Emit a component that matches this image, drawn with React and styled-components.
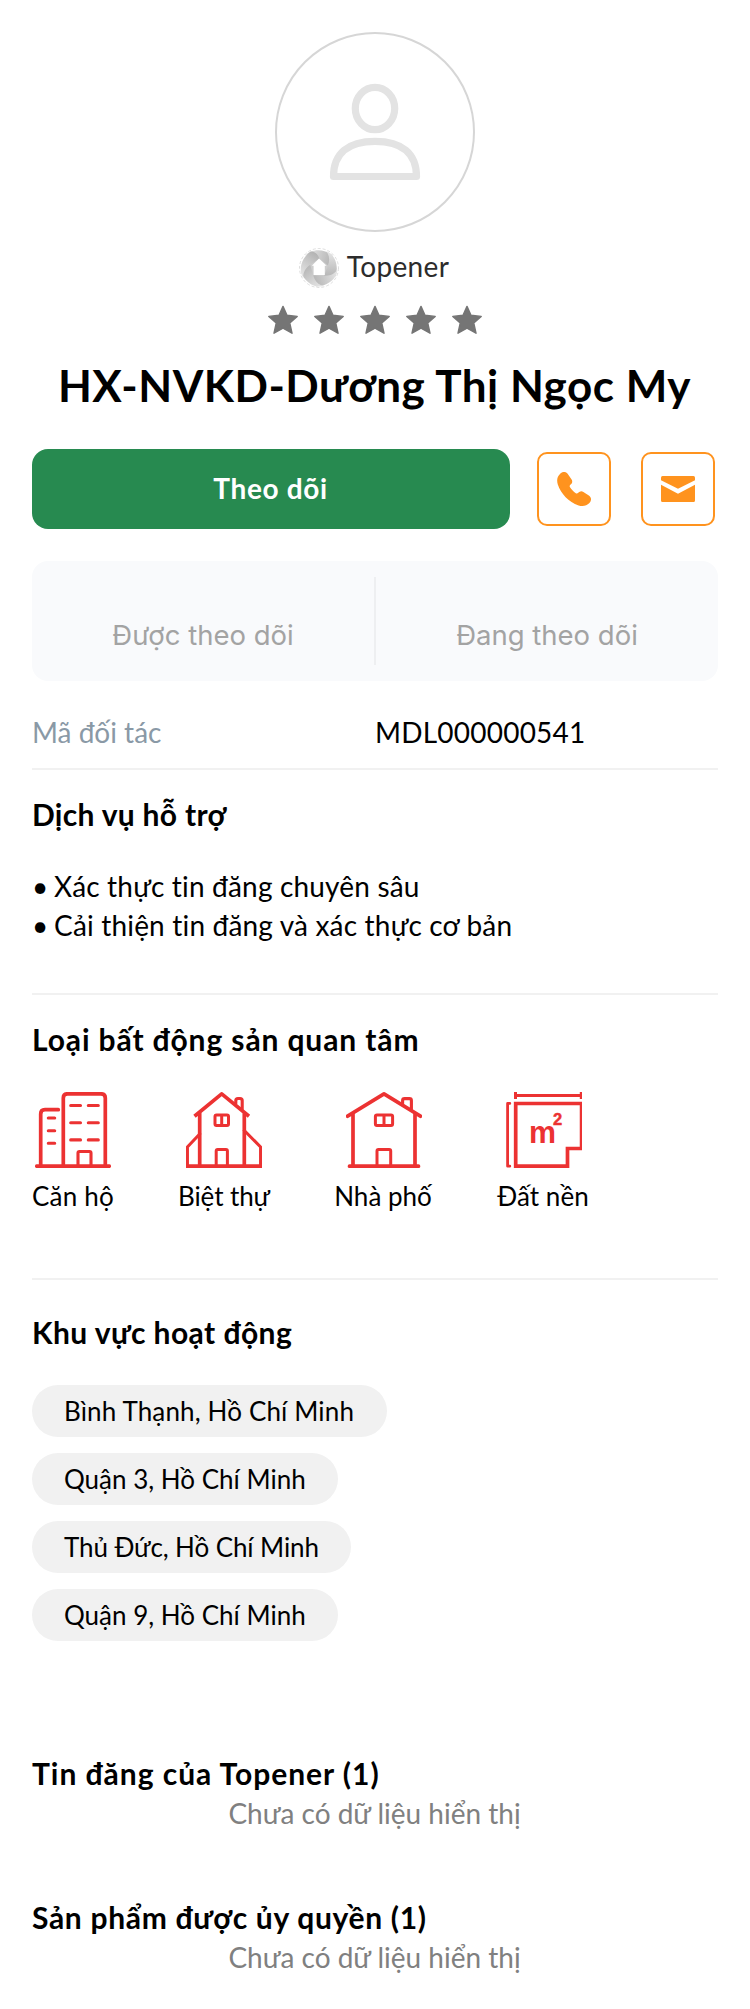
import React from "react";
import styled, { createGlobalStyle } from "styled-components";

const GlobalStyle = createGlobalStyle`
  * { box-sizing: border-box; }
  body {
    margin: 0;
    background: #fff;
    color: #000;
    font-family: Lato, "Open Sans", sans-serif;
    font-size: 28px;
    font-variant-ligatures: none;
  }
`;

const Page = styled.main`
  width: 750px;
  min-height: 2009px;
  padding: 32px 32px 0;
`;

const Header = styled.header`
  display: flex;
  flex-direction: column;
  align-items: center;
`;

const Avatar = styled.div`
  width: 200px;
  height: 200px;
  border: 2px solid #d6d6d6;
  border-radius: 50%;
  overflow: hidden;
  svg { display: block; margin: -2px; }
`;

const Brand = styled.div`
  display: flex;
  gap: 8px;
  height: 40px;
  margin-top: 16px;
  padding-right: 2px;
  line-height: 37px;
  color: #2c2c2c;
  letter-spacing: 0.35px;
`;

const Stars = styled.div`
  display: flex;
  gap: 16px;
  height: 31px;
  margin-top: 16px;
  align-items: center;
`;

const Name = styled.h1`
  margin: 22px 0 0;
  padding-right: 1px;
  font-size: 44px;
  line-height: 56px;
  font-weight: 700;
  letter-spacing: 0.52px;
  white-space: nowrap;
`;

const Actions = styled.div`
  display: flex;
  align-items: center;
  margin-top: 36px;
`;

const FollowButton = styled.button`
  width: 478px;
  height: 80px;
  padding: 0 1px 2px 0;
  margin-right: 27px;
  border: 0;
  border-radius: 16px;
  background: #278a50;
  color: #fff;
  font: 700 28px Lato, sans-serif;
  letter-spacing: 0.65px;
`;

const ContactButton = styled.button`
  display: flex;
  align-items: center;
  justify-content: center;
  width: 74px;
  height: 74px;
  padding: 0;
  border: 2px solid #ff931e;
  border-radius: 10px;
  background: #fff;
  color: #ff931e;
  & + & { margin-left: 30px; }
`;

const Stats = styled.div`
  display: grid;
  grid-template-columns: 1fr 2px 1fr;
  height: 120px;
  margin-top: 32px;
  padding: 16px 0;
  border-radius: 16px;
  background: #f9fafc;
`;

const StatDivider = styled.div`
  background: #eeeff1;
`;

const Stat = styled.div`
  padding-top: 38px;
  text-align: center;
  font-family: Inter, Roboto, sans-serif;
  font-size: 27.5px;
  line-height: 40px;
  color: #a3a3a3;
`;

const InfoRow = styled.div`
  display: grid;
  grid-template-columns: 1fr 1fr;
  margin-top: 31px;
  padding-bottom: 16px;
  border-bottom: 2px solid #f1f1f1;
  line-height: 40px;
`;

const InfoLabel = styled.span`
  color: #8a99a6;
`;

const InfoValue = styled.span`
  letter-spacing: 0.22px;
`;

const Section = styled.section`
  padding: ${(p) => p.$top}px 0 ${(p) => p.$bottom}px;
  border-bottom: ${(p) => (p.$line ? "2px solid #f1f1f1" : "0")};
`;

const Heading = styled.h2`
  margin: 0;
  font-size: 30px;
  line-height: 40px;
  font-weight: 700;
  letter-spacing: ${(p) => p.$spacing}px;
`;

const ServiceList = styled.ul`
  margin: 33px 0 0;
  padding: 0;
  list-style: none;
`;

const Service = styled.li`
  display: flex;
  line-height: 39px;
  letter-spacing: 0.18px;
`;

const Bullet = styled.span`
  width: 22px;
`;

const Kinds = styled.div`
  display: flex;
  gap: 64px;
  margin-top: 33px;
`;

const Kind = styled.div`
  display: flex;
  flex-direction: column;
  align-items: center;
  gap: 10px;
  width: ${(p) => p.$width}px;
  font-size: 26px;
  line-height: 36px;
  white-space: nowrap;
`;

const KindLabel = styled.span`
  margin-right: ${(p) => p.$nudge}px;
  letter-spacing: ${(p) => p.$spacing}px;
`;

const Areas = styled.div`
  display: flex;
  flex-direction: column;
  align-items: flex-start;
  gap: 16px;
  margin-top: 33px;
`;

const Area = styled.span`
  height: 52px;
  width: ${(p) => p.$width}px;
  padding-left: 32px;
  border-radius: 26px;
  background: #f1f1f1;
  font-size: 26px;
  line-height: 52px;
  letter-spacing: ${(p) => p.$spacing}px;
  white-space: nowrap;
`;

const Empty = styled.p`
  margin: 1px 0 0;
  padding-right: 1px;
  line-height: 39px;
  text-align: center;
  color: #808080;
`;

const RedIcon = styled.svg`
  display: block;
  width: 76px;
  height: 76px;
  fill: none;
  stroke: #ec3232;
  stroke-width: 3.7;
  stroke-linecap: round;
  stroke-linejoin: round;
`;

const PersonIcon = () => (
  <svg width="200" height="200" fill="none" stroke="#e3e3e3" strokeWidth="7.2" strokeLinejoin="round">
    <ellipse cx="100" cy="76.5" rx="19.7" ry="21.2" />
    <path d="M58.5 144.5C58.5 121.5 73 109.4 100 109.4S141.5 121.5 141.5 144.5Z" />
  </svg>
);

const BrandLogo = () => (
  <svg width="40" height="40" viewBox="0 0 40 40">
    <defs>
      <linearGradient id="blade" gradientUnits="userSpaceOnUse" x1="6" y1="6" x2="32" y2="14">
        <stop offset="0" stopColor="#e8e8e8" />
        <stop offset="1" stopColor="#b4b4b4" />
      </linearGradient>
    </defs>
    <circle cx="20" cy="20" r="19.5" fill="#fff" stroke="#d6d6d6" strokeWidth="0.8" strokeDasharray="3 2" />
    <circle cx="20" cy="20" r="12" fill="#cdcdcd" />
    {[0, 72, 144, 216, 288].map((a) => (
      <path
        key={a}
        transform={`rotate(${a} 20 20)`}
        fill="url(#blade)"
        d="M6 8C11 1 24 -.2 33 7C34.5 11 32.5 15 29 17.5L20 10.5C15 6.5 10 6.5 6 8Z"
      />
    ))}
    <path d="M20 10.5L27.6 17.8H25.8V27H14.6V17.8H12.8Z" fill="#fff" />
  </svg>
);

const StarIcon = () => (
  <svg width="30" height="30" viewBox="0 0 30 30" fill="#757575" stroke="#757575" strokeWidth="1.4" strokeLinejoin="round">
    <path d="M15 1.4L19 10.2L29.2 11.4L21.8 18.1L24 28.2L15 23.2L6 28.2L8.2 18.1L.8 11.4L11 10.2Z" />
  </svg>
);

const PhoneIcon = () => (
  <svg width="34" height="34" viewBox="0 0 34 34" fill="currentColor">
    <path d="M3 2C5.5-.6 8.8-.4 10.8 2L14.6 7.6C15.8 9.6 15.2 11.2 13.6 12.6C12.6 13.4 12.4 14.2 13 15.2C14.6 17.6 16.6 19.8 18.8 21.2C19.8 21.8 20.6 21.5 21.2 20.8C22.8 19.2 24.6 18.8 26.4 20L32.2 23.8C34.6 25.6 34.6 28.6 32.4 31C29.6 34 25.6 34.6 21.6 33.4C11.6 30 4 21.6.8 12.4C-.4 8.6 0 4.8 3 2Z" />
  </svg>
);

const MailIcon = () => (
  <svg width="34" height="26" viewBox="0 0 34 26" fill="currentColor">
    <path d="M1.5 0H32.5Q34 0 34 1.5V4.3L17 12.8L0 4.3V1.5Q0 0 1.5 0Z" />
    <path d="M0 8.8L17 17.7L34 8.8V24.5Q34 26 32.5 26H1.5Q0 26 0 24.5Z" />
  </svg>
);

const ApartmentIcon = () => (
  <RedIcon viewBox="0 0 76 76">
    <path d="M1.8 74.2H74.2M28.3 74V6Q28.3 1.8 32.5 1.8H66Q70.3 1.8 70.3 6V74M5.7 74V22Q5.7 17.7 10 17.7H23.3" />
    <path
      strokeWidth="3.1"
      d="M13.3 26H19.7M13.3 38.7H19.7M13.3 51.3H19.7M35.7 13.5H45.5M53.3 13.5H63.3M35.7 30.7H45.5M53.3 30.7H63.3M35.7 47.9H45.5M53.3 47.9H63.3M43 73V61Q43 59.5 44.5 59.5H54.5Q56 59.5 56 61V73"
    />
  </RedIcon>
);

const VillaIcon = () => (
  <RedIcon viewBox="0 0 76 76">
    <path strokeLinecap="butt" d="M0 74.2H76M13.7 21V74M58.3 21V74M8.5 24.3L35.7 1.9L63 24.3" />
    <path strokeWidth="3.1" d="M13.7 42L1.4 55V73M58.3 38.5L74.6 55V73M49.8 11.5V8.5Q49.8 6.5 52 6.5H54Q56.2 6.5 56.2 8.5V17" />
    <path strokeWidth="3" d="M30.5 22.9H41Q42.5 22.9 42.5 24.4V32Q42.5 33.5 41 33.5H30.5Q29 33.5 29 32V24.4Q29 22.9 30.5 22.9ZM35.7 23V33.5M30.2 73V59Q30.2 57.5 31.7 57.5H39.9Q41.4 57.5 41.4 59V73" />
  </RedIcon>
);

const TownhouseIcon = () => (
  <RedIcon viewBox="0 0 76 76">
    <path d="M3.5 74.2H72.5M7 22V74M69 22V74M1.6 24.2L38 1.9L74.4 24.2" />
    <path strokeWidth="3.1" d="M56.6 12V8.5Q56.6 6.6 58.6 6.6H63.4Q65.4 6.6 65.4 8.5V17" />
    <path strokeWidth="3" d="M31 22.9H45Q46.6 22.9 46.6 24.4V32Q46.6 33.5 45 33.5H31Q29.4 33.5 29.4 32V24.4Q29.4 22.9 31 22.9ZM38 23V33.5M31 73V59Q31 57.5 32.5 57.5H43.2Q44.7 57.5 44.7 59V73" />
  </RedIcon>
);

const LandIcon = () => (
  <RedIcon viewBox="0 0 76 76">
    <path strokeWidth="3" strokeLinecap="butt" d="M9.5 3.5H75M9.5 0V7M75.3 0V7" />
    <path strokeWidth="2.8" d="M3.8 11.4H1.6V74.2H3.8" />
    <path strokeLinejoin="miter" d="M75.6 11.5H9.7V74.2H61.5V56.5H75.6Z" />
    <g fill="#ec3232" stroke="none" fontFamily="Liberation Sans, sans-serif" fontWeight="700">
      <text x="23" y="51.3" fontSize="32" textLength="27" lengthAdjust="spacingAndGlyphs">m</text>
      <text x="47" y="33" fontSize="16.5" stroke="#ec3232" strokeWidth="0.5">2</text>
    </g>
  </RedIcon>
);

const kinds = [
  { label: "Căn hộ", width: 82, Icon: ApartmentIcon, spacing: 0.2, nudge: 0 },
  { label: "Biệt thự", width: 92, Icon: VillaIcon, spacing: -0.1, nudge: 0 },
  { label: "Nhà phố", width: 100, Icon: TownhouseIcon, spacing: 0, nudge: 2 },
  { label: "Đất nền", width: 92, Icon: LandIcon, spacing: 0.05, nudge: 2 },
];

const areas = [
  { label: "Bình Thạnh, Hồ Chí Minh", width: 355, spacing: 0.15 },
  { label: "Quận 3, Hồ Chí Minh", width: 306, spacing: 0 },
  { label: "Thủ Đức, Hồ Chí Minh", width: 319, spacing: -0.09 },
  { label: "Quận 9, Hồ Chí Minh", width: 306, spacing: 0 },
];

const services = ["Xác thực tin đăng chuyên sâu", "Cải thiện tin đăng và xác thực cơ bản"];

export default function App() {
  return (
    <Page>
      <GlobalStyle />
      <Header>
        <Avatar><PersonIcon /></Avatar>
        <Brand><BrandLogo /><span>Topener</span></Brand>
        <Stars>{[1, 2, 3, 4, 5].map((n) => <StarIcon key={n} />)}</Stars>
        <Name>HX-NVKD-Dương Thị Ngọc My</Name>
      </Header>
      <Actions>
        <FollowButton>Theo dõi</FollowButton>
        <ContactButton aria-label="Gọi"><PhoneIcon /></ContactButton>
        <ContactButton aria-label="Email"><MailIcon /></ContactButton>
      </Actions>
      <Stats>
        <Stat>Được theo dõi</Stat>
        <StatDivider />
        <Stat>Đang theo dõi</Stat>
      </Stats>
      <InfoRow>
        <InfoLabel>Mã đối tác</InfoLabel>
        <InfoValue>MDL000000541</InfoValue>
      </InfoRow>
      <Section $top={24} $bottom={48} $line>
        <Heading $spacing={0.3}>Dịch vụ hỗ trợ</Heading>
        <ServiceList>
          {services.map((s) => <Service key={s}><Bullet>•</Bullet>{s}</Service>)}
        </ServiceList>
      </Section>
      <Section $top={24} $bottom={64} $line>
        <Heading $spacing={0.88}>Loại bất động sản quan tâm</Heading>
        <Kinds>
          {kinds.map(({ label, width, Icon, spacing, nudge }) => (
            <Kind key={label} $width={width}>
              <Icon />
              <KindLabel $spacing={spacing} $nudge={nudge}>{label}</KindLabel>
            </Kind>
          ))}
        </Kinds>
      </Section>
      <Section $top={32} $bottom={112}>
        <Heading $spacing={0.44}>Khu vực hoạt động</Heading>
        <Areas>
          {areas.map((a) => <Area key={a.label} $width={a.width} $spacing={a.spacing}>{a.label}</Area>)}
        </Areas>
      </Section>
      <Section $top={0} $bottom={64}>
        <Heading $spacing={0.97}>Tin đăng của Topener (1)</Heading>
        <Empty>Chưa có dữ liệu hiển thị</Empty>
      </Section>
      <Section $top={0} $bottom={0}>
        <Heading $spacing={0.68}>Sản phẩm được ủy quyền (1)</Heading>
        <Empty>Chưa có dữ liệu hiển thị</Empty>
      </Section>
    </Page>
  );
}
